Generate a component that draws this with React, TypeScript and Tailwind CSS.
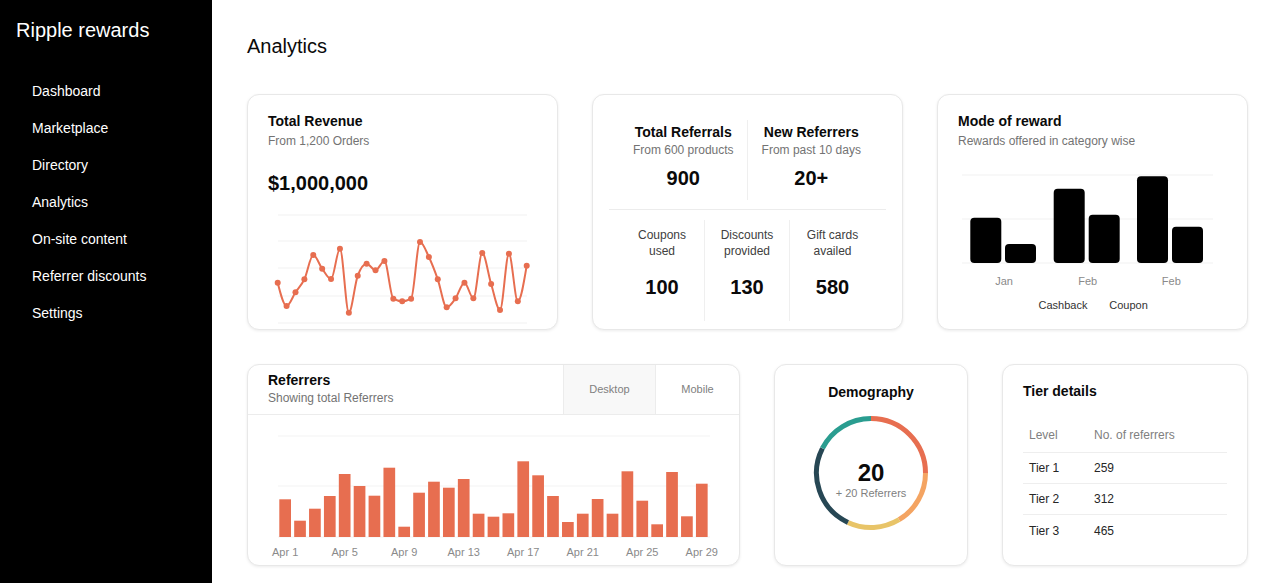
import React from "react";

const ORANGE = "#e76e50";

const lineY = [
  282.7, 306, 292.3, 279.3, 255, 268.7, 279, 248.7, 312.7, 275.7, 263.7, 270.3, 261, 298.7, 301.3, 298.7,
  242, 257, 279.3, 307.3, 298.3, 282.7, 298.3, 253, 284, 310, 253.7, 301.3, 265.7,
];

const barTops = [
  499.3, 520.7, 508.7, 496, 474, 486, 495.7, 467.7, 526.7, 492.7, 481.7, 487.7, 479, 513.7, 516.7, 513.3,
  461.3, 475.3, 496, 522, 513.7, 499, 513.7, 471.3, 500.7, 524.3, 472, 516.3, 483.7,
];

function monotonePath(pts: [number, number][]) {
  const n = pts.length;
  const sign = (v: number) => (v < 0 ? -1 : 1);
  const t: number[] = new Array(n).fill(0);
  for (let i = 1; i < n - 1; i++) {
    const [x0, y0] = pts[i - 1];
    const [x1, y1] = pts[i];
    const [x2, y2] = pts[i + 1];
    const h0 = x1 - x0;
    const h1 = x2 - x1;
    const s0 = (y1 - y0) / h0;
    const s1 = (y2 - y1) / h1;
    const p = (s0 * h1 + s1 * h0) / (h0 + h1);
    t[i] = (sign(s0) + sign(s1)) * Math.min(Math.abs(s0), Math.abs(s1), 0.5 * Math.abs(p)) || 0;
  }
  {
    const [x0, y0] = pts[0];
    const [x1, y1] = pts[1];
    t[0] = (3 * (y1 - y0) / (x1 - x0) - t[1]) / 2;
    const [xa, ya] = pts[n - 2];
    const [xb, yb] = pts[n - 1];
    t[n - 1] = (3 * (yb - ya) / (xb - xa) - t[n - 2]) / 2;
  }
  let d = `M${pts[0][0]},${pts[0][1]}`;
  for (let i = 0; i < n - 1; i++) {
    const [x0, y0] = pts[i];
    const [x1, y1] = pts[i + 1];
    const dx = (x1 - x0) / 3;
    d += ` C${x0 + dx},${y0 + dx * t[i]} ${x1 - dx},${y1 - dx * t[i + 1]} ${x1},${y1}`;
  }
  return d;
}

function RevenueChart() {
  const pts: [number, number][] = lineY.map((y, i) => [29.7 + i * 8.893, y - 212]);
  const grid = [3, 29, 56, 84, 111];
  return (
    <svg width={309} height={116} className="block mt-[15px]">
      {grid.map((g) => (
        <line key={g} x1={30} x2={279} y1={g} y2={g} stroke="#f1f1f1" strokeWidth={1} />
      ))}
      <path d={monotonePath(pts)} fill="none" stroke={ORANGE} strokeWidth={2} />
      {pts.map(([x, y], i) => (
        <circle key={i} cx={x} cy={y} r={3} fill={ORANGE} />
      ))}
    </svg>
  );
}

function ModeChart() {
  const bars = [
    { x: 32.3, top: 52.7 },
    { x: 67, top: 79 },
    { x: 115.7, top: 23.7 },
    { x: 150.7, top: 49.7 },
    { x: 199, top: 11.3 },
    { x: 234, top: 61.7 },
  ];
  return (
    <svg width={309} height={150} className="block mt-4">
      {[10, 54, 98].map((g) => (
        <line key={g} x1={24} x2={275} y1={g} y2={g} stroke="#f1f1f1" strokeWidth={1} />
      ))}
      {bars.map((b, i) => (
        <rect key={i} x={b.x} y={b.top} width={31} height={98 - b.top} rx={4} fill="#000" />
      ))}
      {[
        ["Jan", 66],
        ["Feb", 149.7],
        ["Feb", 233.3],
      ].map(([l, x], i) => (
        <text key={i} x={x as number} y={120} textAnchor="middle" fontSize={11} fill="#8a8a8a">
          {l}
        </text>
      ))}
      <text x={125} y={144} textAnchor="middle" fontSize={11} fill="#333">
        Cashback
      </text>
      <text x={190.5} y={144} textAnchor="middle" fontSize={11} fill="#333">
        Coupon
      </text>
    </svg>
  );
}

function ReferrersChart() {
  const labels = ["Apr 1", "Apr 5", "Apr 9", "Apr 13", "Apr 17", "Apr 21", "Apr 25", "Apr 29"];
  return (
    <svg width={491} height={150} className="block">
      {[21, 71, 122].map((g) => (
        <line key={g} x1={30} x2={462} y1={g} y2={g} stroke="#f3f3f3" strokeWidth={1} />
      ))}
      {barTops.map((t, i) => (
        <rect key={i} x={31.3 + i * 14.88} y={t - 415} width={11.7} height={537 - t} fill={ORANGE} />
      ))}
      {labels.map((l, k) => (
        <text
          key={l}
          x={31.3 + 5.85 + k * 4 * 14.88}
          y={141}
          textAnchor="middle"
          fontSize={11}
          fill="#8a8a8a"
        >
          {l}
        </text>
      ))}
    </svg>
  );
}

function Donut() {
  const cx = 60;
  const cy = 60;
  const r = 54.5;
  const segs: [number, number, string][] = [
    [0, 90, "#e76e50"],
    [90, 149, "#f4a462"],
    [149, 205, "#e8c468"],
    [205, 297, "#274754"],
    [297, 360, "#2a9d90"],
  ];
  const pt = (a: number) => {
    const rad = (a * Math.PI) / 180;
    return [cx + r * Math.sin(rad), cy - r * Math.cos(rad)];
  };
  return (
    <svg width={120} height={120} className="block mx-auto mt-[11px]">
      {segs.map(([a0, a1, c]) => {
        const [x0, y0] = pt(a0);
        const [x1, y1] = pt(a1 - 0.01);
        const large = a1 - a0 > 180 ? 1 : 0;
        return (
          <path
            key={c}
            d={`M${x0},${y0} A${r},${r} 0 ${large} 1 ${x1},${y1}`}
            fill="none"
            stroke={c}
            strokeWidth={5}
          />
        );
      })}
      <text x={60} y={68} textAnchor="middle" fontSize={24} fontWeight={700} fill="#0a0a0a">
        20
      </text>
      <text x={60} y={84} textAnchor="middle" fontSize={11} fill="#808080">
        + 20 Referrers
      </text>
    </svg>
  );
}

const card = "bg-white border border-[#e8e8e8] rounded-xl shadow-[0_1px_3px_rgba(0,0,0,0.08)]";

export default function App() {
  const nav = ["Dashboard", "Marketplace", "Directory", "Analytics", "On-site content", "Referrer discounts", "Settings"];
  return (
    <div
      className="flex min-h-[583px] w-full bg-white text-[#0a0a0a]"
      style={{ fontFamily: '"Liberation Sans", Arial, sans-serif' }}
    >
      <aside className="w-[212px] shrink-0 bg-black px-4 pt-4 text-white">
        <div className="text-[20px] leading-7">Ripple rewards</div>
        <nav className="mt-[37px] flex flex-col gap-[17px] pl-4">
          {nav.map((n) => (
            <div key={n} className="text-sm leading-5">
              {n}
            </div>
          ))}
        </nav>
      </aside>

      <main className="flex-1 pl-[35px] pr-[32px] pt-8">
        <h1 className="text-[20px] leading-7 mb-[34px]">Analytics</h1>

        <div className="grid grid-cols-3 gap-[34px]">
          {/* Total revenue */}
          <div className={`${card} h-[236px] flex flex-col overflow-hidden`}>
            <div className="px-5 pt-4">
              <div className="text-sm font-bold leading-5">Total Revenue</div>
              <div className="mt-0.5 text-xs leading-4 text-[#737373]">From 1,200 Orders</div>
              <div className="mt-5 text-[20px] font-bold leading-7">$1,000,000</div>
            </div>
            <RevenueChart />
          </div>

          {/* Referrals */}
          <div className={`${card} h-[236px] px-4`}>
            <div className="mx-[11px] mt-[25px] grid h-[80px] grid-cols-2">
              <div className="border-r border-[#efefef] pt-0.5 text-center">
                <div className="text-sm font-bold leading-5">Total Referrals</div>
                <div className="text-xs leading-4 text-[#737373]">From 600 products</div>
                <div className="mt-1.5 text-[20px] font-bold leading-7">900</div>
              </div>
              <div className="pt-0.5 text-center">
                <div className="text-sm font-bold leading-5">New Referrers</div>
                <div className="text-xs leading-4 text-[#737373]">From past 10 days</div>
                <div className="mt-1.5 text-[20px] font-bold leading-7">20+</div>
              </div>
            </div>
            <div className="mt-[9px] border-t border-[#ececec]" />
            <div className="mx-[11px] mt-[10px] grid h-[101px] grid-cols-3">
              {[
                ["Coupons", "used", "100"],
                ["Discounts", "provided", "130"],
                ["Gift cards", "availed", "580"],
              ].map(([a, b, v], i) => (
                <div
                  key={a}
                  className={`pt-[7px] text-center ${i < 2 ? "border-r border-[#efefef]" : ""}`}
                >
                  <div className="text-xs leading-4 text-[#404040]">{a}</div>
                  <div className="text-xs leading-4 text-[#404040]">{b}</div>
                  <div className="mt-[14px] text-[20px] font-bold leading-7">{v}</div>
                </div>
              ))}
            </div>
          </div>

          {/* Mode of reward */}
          <div className={`${card} h-[236px] flex flex-col overflow-hidden`}>
            <div className="px-5 pt-4">
              <div className="text-sm font-bold leading-5">Mode of reward</div>
              <div className="mt-0.5 text-xs leading-4 text-[#737373]">Rewards offered in category wise</div>
            </div>
            <ModeChart />
          </div>
        </div>

        <div className="mt-[34px] grid grid-cols-[1fr_194px_246px] gap-[34px]">
          {/* Referrers */}
          <div className={`${card} h-[202px] flex flex-col overflow-hidden`}>
            <div className="flex border-b border-[#ececec]">
              <div className="flex-1 px-5 pt-[5px] pb-[8px]">
                <div className="text-sm font-bold leading-5">Referrers</div>
                <div className="text-xs leading-4 text-[#737373]">Showing total Referrers</div>
              </div>
              <div className="flex w-[92px] items-center justify-center border-l border-[#ececec] bg-[#f8f8f8] text-[11px] text-[#808080]">
                Desktop
              </div>
              <div className="flex w-[84px] items-center justify-center border-l border-[#ececec] text-[11px] text-[#808080]">
                Mobile
              </div>
            </div>
            <ReferrersChart />
          </div>

          {/* Demography */}
          <div className={`${card} h-[202px] pt-[17px]`}>
            <div className="text-center text-sm font-bold leading-5">Demography</div>
            <Donut />
          </div>

          {/* Tier details */}
          <div className={`${card} h-[202px] px-5 pt-4`}>
            <div className="text-sm font-bold leading-5">Tier details</div>
            <div className="mt-4 text-xs">
              <div className="grid h-[36px] grid-cols-[65px_1fr] items-center border-b border-[#eeeeee] text-[#808080]">
                <div className="pl-1.5">Level</div>
                <div className="pl-1.5">No. of referrers</div>
              </div>
              {[
                ["Tier 1", "259"],
                ["Tier 2", "312"],
                ["Tier 3", "465"],
              ].map(([t, v], i) => (
                <div
                  key={t}
                  className={`grid h-[31px] grid-cols-[65px_1fr] items-center text-[#262626] ${
                    i < 2 ? "border-b border-[#eeeeee]" : ""
                  }`}
                >
                  <div className="pl-1.5">{t}</div>
                  <div className="pl-1.5">{v}</div>
                </div>
              ))}
            </div>
          </div>
        </div>
      </main>
    </div>
  );
}
